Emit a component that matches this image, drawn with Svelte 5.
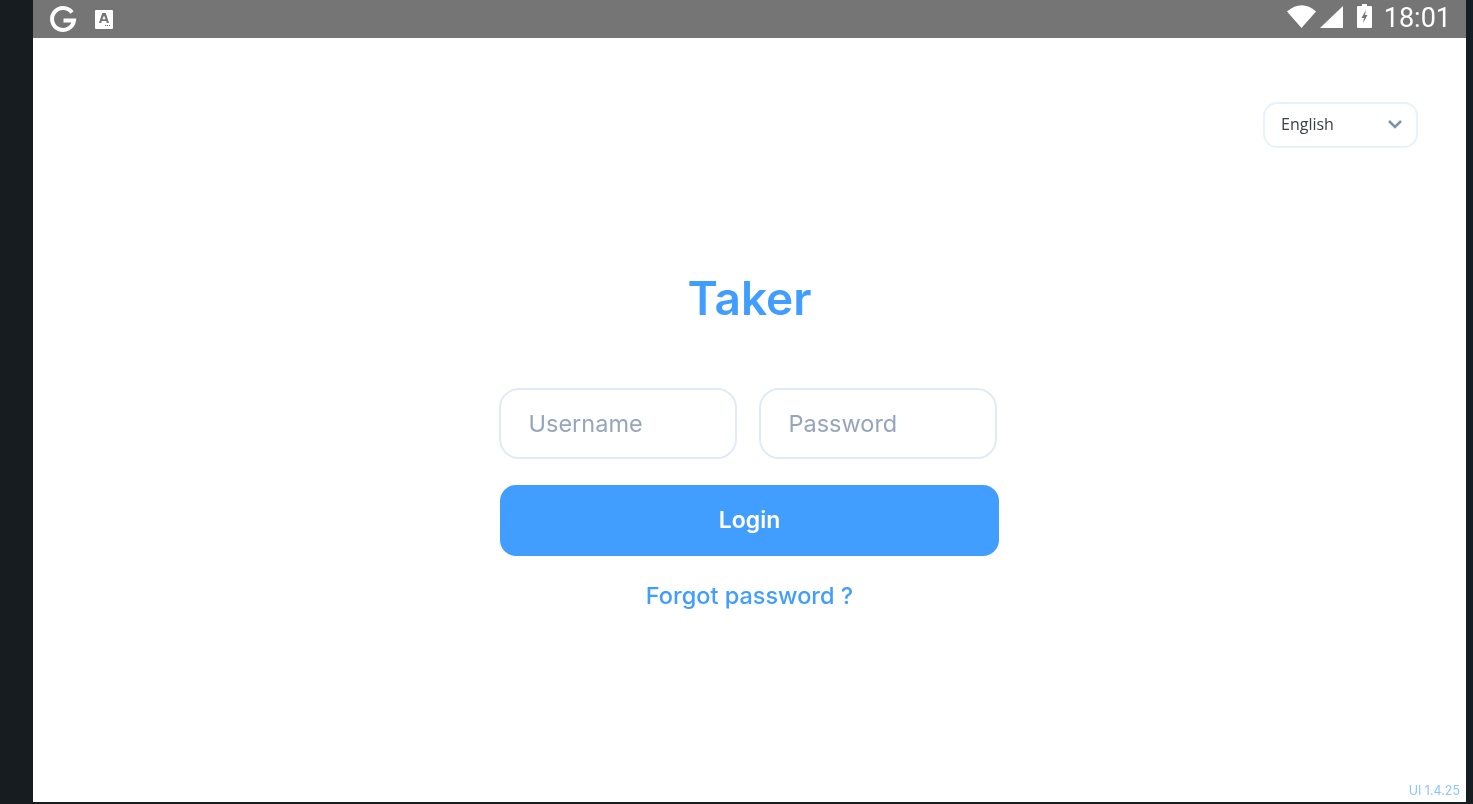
<script>
	let username = $state("");
	let password = $state("");
	let version = "UI 1.4.25";
</script>

<div class="screen">
	<div class="status-bar">
		<div class="status-left">
			<svg width="28" height="28" viewBox="0 0 28 28" fill="none">
				<path d="M23 7.500A11 11 0 1 0 25 15.500H14.500" stroke="#fff" stroke-width="4" />
			</svg>
			<svg width="18" height="19" viewBox="0 0 18 19">
				<path fill="#fff" fill-rule="evenodd" d="M1 0h16a1 1 0 0 1 1 1v17a1 1 0 0 1-1 1H1a1 1 0 0 1-1-1V1a1 1 0 0 1 1-1zM7.300 3 4 13h2.200l.6-2h4.400l.6 2H14L10.700 3zM9 5.500l1.600 3.800H7.400zM10 15h1v1h-1zm2 0h1v1h-1zm2 0h1v1h-1z" />
			</svg>
		</div>
		<div class="status-right">
			<svg width="30" height="23" viewBox="0 0 30 23">
				<path fill="#fff" d="M0 6.500Q15 -6 29 6.500L14.500 23z" />
			</svg>
			<svg class="signal" width="23" height="22" viewBox="0 0 23 22">
				<path fill="#fff" d="M23 0v22H0z" />
			</svg>
			<svg class="battery" width="15" height="24" viewBox="0 0 15 24">
				<path fill="#fff" fill-rule="evenodd" d="M5 0h5v2h4a1 1 0 0 1 1 1v20a1 1 0 0 1-1 1H1a1 1 0 0 1-1-1V3a1 1 0 0 1 1-1h4zM9 6 4.500 14h2.500l-1 5 4.500-8H8z" />
			</svg>
			<span class="clock">18:01</span>
		</div>
	</div>

	<main class="content">
		<div class="lang-row">
			<button class="lang" type="button">
				<span>English</span>
				<svg width="16" height="10" viewBox="0 0 16 10" fill="none">
					<path d="M2 2l6 6 6-6" stroke="#7f92ad" stroke-width="2.500" />
				</svg>
			</button>
		</div>

		<div class="login">
			<h1>Taker</h1>
			<div class="fields">
				<input type="text" placeholder="Username" bind:value={username} />
				<input type="password" placeholder="Password" bind:value={password} />
			</div>
			<button class="submit" type="button">Login</button>
			<a class="forgot" href="#forgot">Forgot password ?</a>
		</div>

		<div class="version">{version}</div>
	</main>
</div>

<style>
	:global(body) {
		margin: 0;
		background: #171c20;
		overflow: hidden;
	}
	.screen {
		width: 1433px;
		height: 802px;
		margin-left: 33px;
		background: #fff;
		display: flex;
		flex-direction: column;
		font-family: "Inter", "Liberation Sans", sans-serif;
		filter: blur(0.6px);
	}
	.status-bar {
		height: 38px;
		flex: none;
		background: #757575;
		display: flex;
		align-items: center;
		justify-content: space-between;
		padding: 0 15px 0 16px;
		box-sizing: border-box;
	}
	.status-left {
		display: flex;
		align-items: center;
		gap: 18px;
	}
	.status-right {
		display: flex;
		align-items: flex-end;
		align-self: flex-end;
		padding-bottom: 10px;
	}
	.signal {
		margin-left: 3px;
	}
	.battery {
		margin-left: 14px;
	}
	.clock {
		margin-left: 12px;
		margin-bottom: -4px;
		color: #fff;
		font-family: "Roboto", sans-serif;
		font-size: 27px;
		line-height: 1;
	}
	.content {
		flex: 1;
		display: flex;
		flex-direction: column;
		padding: 64px 0 4px;
	}
	.lang-row {
		display: flex;
		justify-content: flex-end;
		padding-right: 48px;
	}
	.lang {
		width: 155px;
		height: 46px;
		background: #fff;
		border: 2px solid #e9f1fa;
		border-radius: 14px;
		display: flex;
		align-items: center;
		justify-content: space-between;
		padding: 0 13px 2px 16px;
		font-family: "Open Sans", sans-serif;
		font-size: 16px;
		color: #3a3f47;
	}
	.login {
		width: 500px;
		margin: 122px auto 0;
		display: flex;
		flex-direction: column;
		align-items: center;
	}
	h1 {
		margin: 0;
		color: #429efe;
		font-size: 46px;
		line-height: 56px;
		font-weight: 600;
	}
	.fields {
		display: flex;
		gap: 22px;
		margin: 62px 4px 0 0;
	}
	input {
		width: 238px;
		height: 71px;
		box-sizing: border-box;
		border: 2px solid #e2ebf5;
		border-radius: 20px;
		padding: 0 28px;
		font-family: inherit;
		font-size: 23.5px;
		background: #fff;
		outline: none;
	}
	input::placeholder {
		color: #97a5bc;
		opacity: 1;
	}
	.submit {
		width: 499px;
		height: 71px;
		margin-top: 26px;
		padding-bottom: 3px;
		background: #429efe;
		color: #fff;
		border: none;
		border-radius: 16px;
		font-family: inherit;
		font-size: 23px;
		font-weight: 600;
	}
	.forgot {
		margin-top: 25px;
		color: #429efe;
		font-size: 23.5px;
		font-weight: 500;
		text-decoration: none;
	}
	.version {
		margin-top: auto;
		padding-right: 6px;
		text-align: right;
		color: #8cc4ff;
		font-size: 12.5px;
	}
</style>
